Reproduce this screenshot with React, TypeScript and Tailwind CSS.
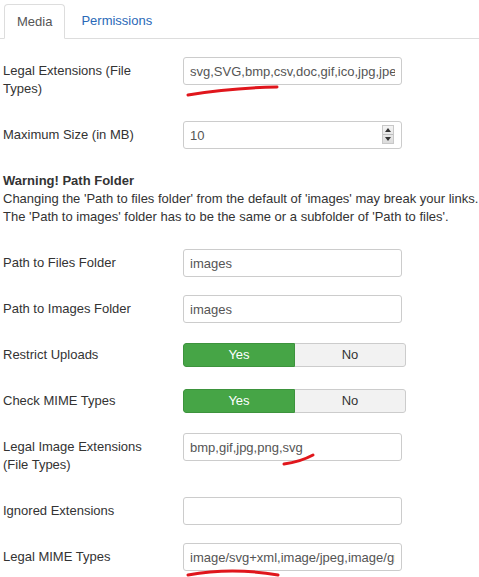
import { ReactNode } from "react";

function Row({ label, children }: { label: ReactNode; children: ReactNode }) {
  return (
    <div className="flex mb-[18px]">
      <div className="w-[160px] mr-[20px] py-[5px]">{label}</div>
      <div>{children}</div>
    </div>
  );
}

function TextBox({ value }: { value: string }) {
  return (
    <input
      readOnly
      defaultValue={value}
      className="w-[219px] h-[28px] px-[6px] border border-[#ccc] rounded-[3px] bg-white text-[13px] text-[#555] outline-none"
    />
  );
}

function Toggle() {
  return (
    <div className="mt-[2px] flex w-[223px] h-[24px] rounded-[3px] overflow-hidden">
      <div className="w-[112px] bg-[#46a546] border border-[#3d933d] rounded-l-[3px] text-white flex items-center justify-center">
        Yes
      </div>
      <div className="flex-1 bg-[#f2f2f2] border border-l-0 border-[#ccc] rounded-r-[3px] text-[#333] flex items-center justify-center">
        No
      </div>
    </div>
  );
}

export default function App() {
  return (
    <div className="relative w-[479px] h-[577px] overflow-hidden bg-white font-['Liberation_Sans',Arial,sans-serif] text-[13px] leading-[18px] text-[#333]">
      {/* Tabs */}
      <div className="flex pt-1 pl-1 border-b border-[#ddd]">
        <div className="-mb-px h-[35px] px-3 flex items-center border border-[#ddd] border-b-white rounded-t-[4px] bg-white text-[#555]">
          Media
        </div>
        <div className="ml-[2px] h-[34px] px-[14px] flex items-center text-[#2a69b8]">Permissions</div>
      </div>

      <div className="pl-[3px] pt-[18px]">
        <Row label={<>Legal Extensions (File<br />Types)</>}>
          <TextBox value="svg,SVG,bmp,csv,doc,gif,ico,jpg,jpeg,odg,odp,ods,odt,pdf,png,ppt,swf,txt,xcf,xls,BMP" />
        </Row>

        <Row label="Maximum Size (in MB)">
          <div className="relative">
            <TextBox value="10" />
            <div className="absolute right-[8px] top-[4px] w-[12px] h-[19px] border border-[#c8c8c8] bg-gradient-to-b from-[#f4f4f4] to-[#dcdcdc] flex flex-col">
              <div className="flex-1 flex items-center justify-center border-b border-[#bdbdbd]">
                <svg width="6" height="4" viewBox="0 0 6 4"><path d="M0 4 L3 0 L6 4 Z" fill="#333" /></svg>
              </div>
              <div className="flex-1 flex items-center justify-center">
                <svg width="6" height="4" viewBox="0 0 6 4"><path d="M0 0 L3 4 L6 0 Z" fill="#333" /></svg>
              </div>
            </div>
          </div>
        </Row>

        {/* warning block; top margin collapses with the row above */}
        <div className="mt-[23px] mb-[23px]">
          <div className="font-bold">Warning! Path Folder</div>
          <p className="whitespace-nowrap">
            Changing the 'Path to files folder' from the default of 'images' may break your links.
            <br />
            The 'Path to images' folder has to be the same or a subfolder of 'Path to files'.
          </p>
        </div>

        <Row label="Path to Files Folder">
          <TextBox value="images" />
        </Row>
        <Row label="Path to Images Folder">
          <TextBox value="images" />
        </Row>
        <Row label="Restrict Uploads">
          <Toggle />
        </Row>
        <Row label="Check MIME Types">
          <Toggle />
        </Row>
        <Row label={<>Legal Image Extensions<br />(File Types)</>}>
          <TextBox value="bmp,gif,jpg,png,svg" />
        </Row>
        <Row label="Ignored Extensions">
          <TextBox value="" />
        </Row>
        <Row label="Legal MIME Types">
          <TextBox value="image/svg+xml,image/jpeg,image/gif,image/png,image/bmp,application/msword" />
        </Row>
      </div>

      {/* red pen marks */}
      <svg className="absolute inset-0 pointer-events-none" width="479" height="577" viewBox="0 0 479 577">
        <g fill="none" stroke="#e0161c" strokeWidth="3" strokeLinecap="round">
          <path d="M188 95 Q230 88 277 87" />
          <path d="M284 464 Q300 462 313 455" />
          <path d="M188 575 Q232 567 278 575" />
        </g>
      </svg>
    </div>
  );
}
